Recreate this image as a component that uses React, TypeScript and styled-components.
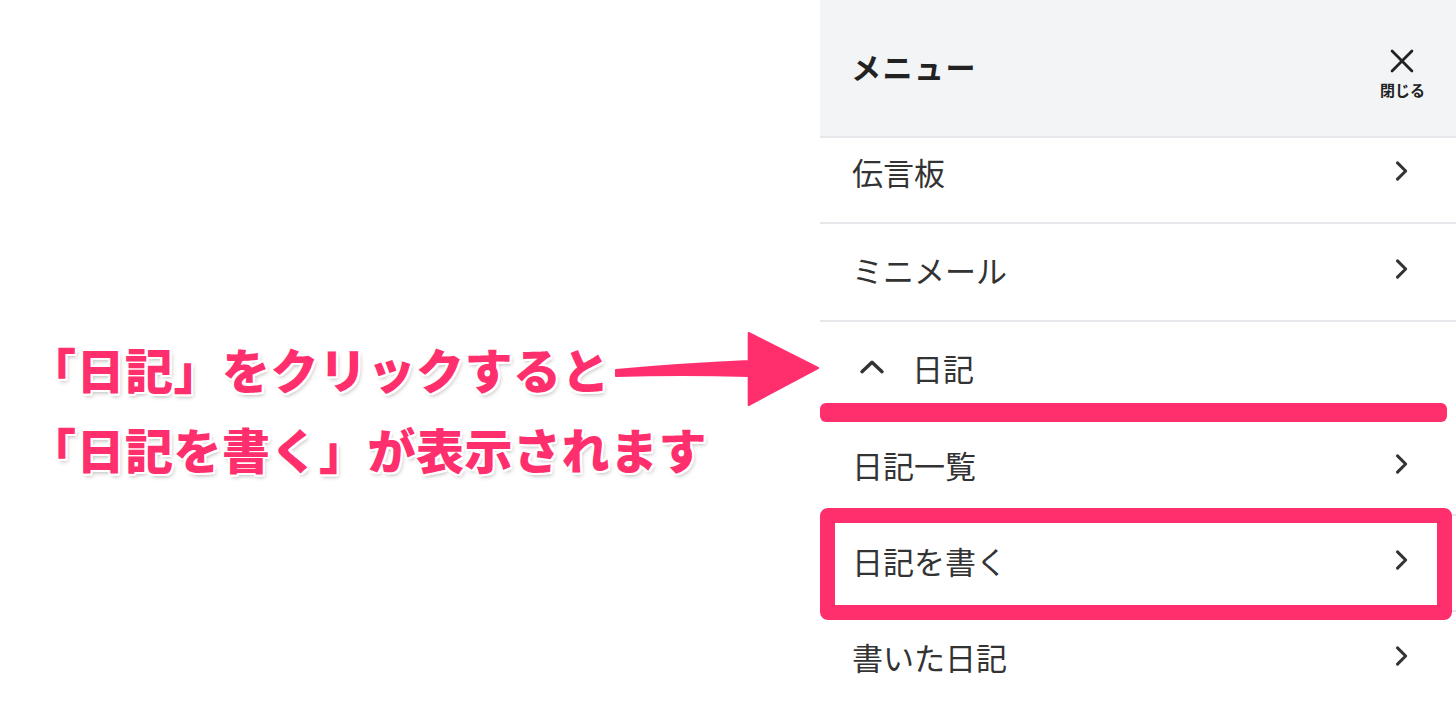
import styled, { createGlobalStyle } from 'styled-components';

const pink = '#ff2f6e';

const GlobalStyle = createGlobalStyle`
  * { box-sizing: border-box; }
  html, body {
    margin: 0;
    padding: 0;
    background: #ffffff;
    font-family: "Noto Sans CJK JP", "Noto Sans", sans-serif;
  }
`;

const Page = styled.div`
  display: flex;
  width: 1456px;
  height: 706px;
  overflow: hidden;
  background: #ffffff;
`;

const Annotation = styled.div`
  flex: 1;
  min-width: 0;
  display: flex;
  flex-direction: column;
  padding: 328px 0 0 28px;
`;

const CalloutLine = styled.div`
  display: flex;
  align-items: center;
  height: 80px;
`;

const CalloutText = styled.span`
  font-size: 48px;
  font-weight: 900;
  letter-spacing: 0.5px;
  color: ${pink};
  white-space: nowrap;
  text-shadow:
    2px 0 0 #fff, -2px 0 0 #fff, 0 2px 0 #fff, 0 -2px 0 #fff,
    2px 2px 0 #fff, -2px -2px 0 #fff, 2px -2px 0 #fff, -2px 2px 0 #fff,
    2px 3px 4px rgba(0, 0, 0, 0.28);
`;

const Arrow = styled.svg`
  flex: 1;
  min-width: 0;
  height: 80px;
  margin-left: 2px;
`;

const Panel = styled.div`
  width: 636px;
  flex-shrink: 0;
  display: flex;
  flex-direction: column;
  background: #ffffff;
`;

const Header = styled.div`
  position: relative;
  z-index: 2;
  height: 138px;
  flex-shrink: 0;
  display: flex;
  align-items: center;
  justify-content: space-between;
  padding: 0 31px 0 31px;
  background: #f3f4f6;
  border-bottom: 2px solid #e6e7eb;
`;

const Title = styled.h1`
  margin: 0 0 4px;
  font-size: 30px;
  font-weight: 700;
  color: #222;
  letter-spacing: 1.5px;
`;

const CloseButton = styled.button`
  display: flex;
  flex-direction: column;
  align-items: center;
  gap: 4px;
  padding: 0;
  margin-top: 10px;
  border: none;
  background: none;
  color: #222;
  font-family: inherit;
  font-size: 15px;
  font-weight: 700;
`;

const List = styled.div`
  margin-top: -12px;
  display: flex;
  flex-direction: column;
`;

const Row = styled.div<{ $height: number; $highlight?: boolean }>`
  position: relative;
  height: ${(p) => p.$height}px;
  flex-shrink: 0;
  display: flex;
  align-items: center;
  justify-content: space-between;
  padding: 0 41px 6px 32px;
  border-bottom: 2px solid #e6e7eb;
  font-size: 31px;
  color: #333;
  ${(p) =>
    p.$highlight &&
    `
    &::after {
      content: '';
      position: absolute;
      top: -8px;
      bottom: -10px;
      left: 0;
      right: 4px;
      border: 15px solid ${pink};
      border-radius: 8px;
      z-index: 1;
    }
  `}
`;

const GroupRow = styled.div`
  position: relative;
  height: 98px;
  flex-shrink: 0;
  display: flex;
  align-items: center;
  gap: 24px;
  padding: 0 32px 8px 36px;
  font-size: 31px;
  color: #333;

  &::after {
    content: '';
    position: absolute;
    left: 0;
    right: 9px;
    bottom: -2px;
    height: 19px;
    border-radius: 6px;
    background: ${pink};
  }
`;

const Chevron = ({ up }: { up?: boolean }) =>
  up ? (
    <svg width="32" height="32" viewBox="0 0 24 24" fill="none" stroke="#333" strokeWidth="2.6" strokeLinecap="round" strokeLinejoin="round">
      <path d="M4.5 15.5l7.5-7 7.5 7" />
    </svg>
  ) : (
    <svg width="28" height="28" viewBox="0 0 24 24" fill="none" stroke="#333" strokeWidth="2.6" strokeLinecap="round" strokeLinejoin="round">
      <path d="M9 5l7 7-7 7" />
    </svg>
  );

const topItems = ['伝言板', 'ミニメール'];
const diaryItems = ['日記一覧', '日記を書く', '書いた日記'];

export default function App() {
  return (
    <Page>
      <GlobalStyle />
      <Annotation>
        <CalloutLine>
          <CalloutText>「日記」をクリックすると</CalloutText>
          <Arrow viewBox="0 0 210 80" preserveAspectRatio="none">
            <path
              d="M4 42 Q70 36 138 33 L138 5 L208 40 L138 77 L138 48 Q70 46 4 48 Z"
              fill={pink}
              stroke={pink}
              strokeWidth="2"
              strokeLinejoin="round"
            />
          </Arrow>
        </CalloutLine>
        <CalloutLine>
          <CalloutText>「日記を書く」が表示されます</CalloutText>
        </CalloutLine>
      </Annotation>
      <Panel>
        <Header>
          <Title>メニュー</Title>
          <CloseButton>
            <svg width="28" height="28" viewBox="0 0 24 24" fill="none" stroke="#222" strokeWidth="2.4" strokeLinecap="round">
              <path d="M3.5 3.5l17 17M20.5 3.5l-17 17" />
            </svg>
            閉じる
          </CloseButton>
        </Header>
        <List>
          {topItems.map((item) => (
            <Row key={item} $height={98}>
              {item}
              <Chevron />
            </Row>
          ))}
          <GroupRow>
            <Chevron up />
            日記
          </GroupRow>
          {diaryItems.map((item) => (
            <Row key={item} $height={96} $highlight={item === '日記を書く'}>
              {item}
              <Chevron />
            </Row>
          ))}
        </List>
      </Panel>
    </Page>
  );
}
